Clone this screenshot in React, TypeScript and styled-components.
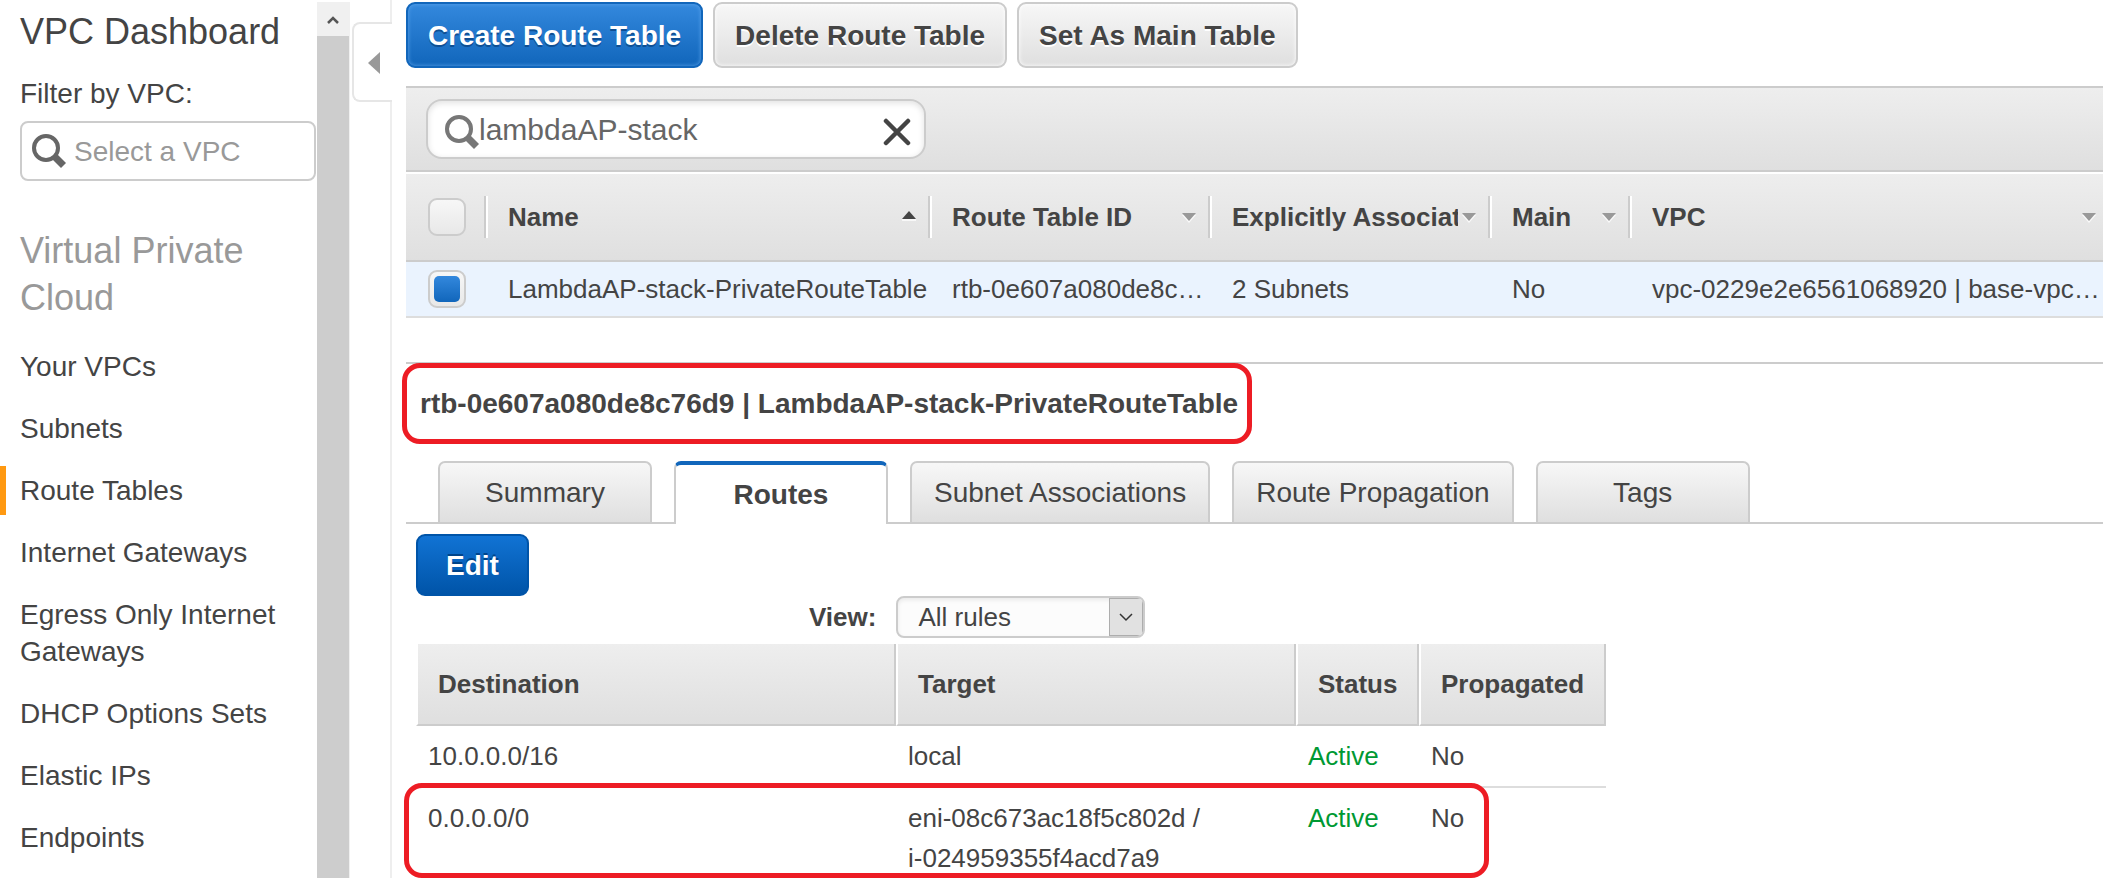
import React, { useState } from 'react';
import styled, { createGlobalStyle, css } from 'styled-components';

const GlobalStyle = createGlobalStyle`
  *, *::before, *::after { box-sizing: border-box; }
  body {
    margin: 0;
    background: #fff;
    color: #444;
    font-family: "Liberation Sans", Arial, Helvetica, sans-serif;
  }
  button, input, select { font-family: inherit; color: inherit; margin: 0; }
`;

const Page = styled.div`
  display: flex;
  height: 100vh;
  overflow: hidden;
`;

/* ---------- sidebar ---------- */

const Sidebar = styled.aside`
  flex: none;
  width: 317px;
  padding: 9px 1px 0 20px;
  overflow: hidden;
`;

const SidebarHeading = styled.h1`
  margin: 0 0 20px;
  font-size: 36px;
  line-height: 46px;
  font-weight: 400;
`;

const FilterLabel = styled.label`
  display: block;
  margin-bottom: 9px;
  font-size: 28px;
  line-height: 37px;
`;

const FilterBox = styled.div`
  display: flex;
  align-items: center;
  gap: 8px;
  height: 60px;
  padding: 0 10px;
  border: 2px solid #ccc;
  border-radius: 8px;
`;

const FilterInput = styled.input`
  flex: 1;
  min-width: 0;
  padding: 0;
  border: 0;
  outline: 0;
  background: none;
  font-size: 28px;
  line-height: 37px;
  &::placeholder { color: #999; opacity: 1; }
`;

const SectionTitle = styled.h2`
  margin: 46px 0 21px;
  font-size: 36px;
  line-height: 47px;
  font-weight: 400;
  color: #999;
`;

const NavList = styled.ul`
  display: flex;
  flex-direction: column;
  gap: 13px;
  margin: 0 0 0 -20px;
  padding: 0;
  list-style: none;
`;

const NavLink = styled.a<{ $active?: boolean }>`
  display: block;
  padding: 6px 20px 6px 14px;
  border-left: 6px solid ${(p) => (p.$active ? '#f91' : 'transparent')};
  color: #444;
  font-size: 28px;
  line-height: 37px;
  text-decoration: none;
`;

const ScrollTrack = styled.div`
  display: flex;
  flex-direction: column;
  flex: none;
  width: 33px;
  padding-right: 1px;
  border-top: 2px solid #fff;
  background: #f0f0f0;
`;

const ScrollArrow = styled.div`
  display: flex;
  flex: none;
  align-items: center;
  justify-content: center;
  height: 34px;
`;

const ScrollThumb = styled.div`
  flex: 1;
  background: #cdcdcd;
`;

const Gutter = styled.div`
  flex: none;
  width: 42px;
  padding: 22px 0 0 2px;
  border-right: 2px solid #eee;
`;

const CollapseButton = styled.button`
  display: flex;
  align-items: center;
  width: 40px;
  height: 80px;
  padding: 2px 0 0 14px;
  border: 2px solid #e6e6e6;
  border-right: 0;
  border-radius: 8px 0 0 8px;
  background: #fff;
`;

/* ---------- toolbar ---------- */

const Main = styled.main`
  flex: 1;
  min-width: 0;
  padding-left: 14px;
  overflow: hidden;
`;

const Actions = styled.div`
  display: flex;
  gap: 10px;
  padding: 2px 0 18px;
`;

const ActionButton = styled.button<{ $primary?: boolean }>`
  height: 66px;
  padding: 2px 20px 0;
  border: 2px solid #ccc;
  border-radius: 9px;
  background: linear-gradient(#f7f7f7, #dfdfdf);
  box-shadow: inset 0 0 4px #fff;
  color: #444;
  font-size: 28px;
  font-weight: 700;
  text-shadow: 0 2px 0 #fff;
  white-space: nowrap;
  ${(p) => p.$primary && css`
    border-color: #1166bb;
    background: linear-gradient(#3388dd, #1166bb);
    box-shadow: inset 0 0 4px #5ba3ea;
    color: #fff;
    text-shadow: 0 2px 0 #0e4f94;
  `}
`;

const SearchBar = styled.div`
  height: 86px;
  padding: 11px 20px 0;
  border: solid #ccc;
  border-width: 2px 0;
  background: linear-gradient(#eee, #dfdfdf);
`;

const SearchBox = styled.div`
  display: flex;
  align-items: center;
  width: 500px;
  height: 60px;
  padding: 5px 11px 0 17px;
  border: 2px solid #ccc;
  border-radius: 16px;
  background: #fff;
  box-shadow: inset 0 2px 6px rgba(0, 0, 0, 0.12);
`;

const SearchInput = styled.input`
  flex: 1;
  min-width: 0;
  height: 48px;
  padding: 0 0 4px;
  border: 0;
  outline: 0;
  background: none;
  color: #666;
  font-size: 30px;
`;

const ClearButton = styled.button`
  display: flex;
  padding: 1px 2px 0;
  border: 0;
  background: none;
`;

/* ---------- route table list ---------- */

const ListTable = styled.table`
  width: 100%;
  table-layout: fixed;
  border-collapse: separate;
  border-spacing: 0;
  font-size: 26px;
  line-height: 34px;
`;

const ListHead = styled.thead`
  background: linear-gradient(#eee, #dfdfdf);
`;

const ListTh = styled.th<{ $w?: number }>`
  width: ${(p) => (p.$w ? `${p.$w}px` : 'auto')};
  height: 90px;
  padding: 0;
  border-top: 2px solid #fff;
  border-bottom: 2px solid #ccc;
`;

const HeadCell = styled.div<{ $last?: boolean }>`
  display: flex;
  align-items: center;
  height: 42px;
  padding: 0 ${(p) => (p.$last ? 7 : 16)}px 0 20px;
  box-shadow: ${(p) => (p.$last ? 'none' : 'inset -2px 0 #fff, inset -4px 0 #ccc')};
`;

const SortButton = styled.button`
  display: flex;
  align-items: center;
  flex: 1;
  gap: 4px;
  min-width: 0;
  padding: 0;
  border: 0;
  background: none;
  font-size: 26px;
  line-height: 34px;
  font-weight: 700;
  text-align: left;
`;

const SortLabel = styled.span`
  flex: 1;
  min-width: 0;
  overflow: hidden;
  white-space: nowrap;
`;

const ListTd = styled.td`
  height: 56px;
  padding: 0 0 0 20px;
  border-bottom: 2px solid #ddd;
  background: #eaf3fe;
  white-space: nowrap;
`;

const CheckBox = styled.input`
  display: block;
  appearance: none;
  width: 38px;
  height: 38px;
  margin: 0 0 0 2px;
  padding: 4px;
  border: 2px solid #ccc;
  border-radius: 9px;
  background: linear-gradient(#f7f7f7, #e8e8e8);
  &:checked::before {
    content: '';
    display: block;
    width: 26px;
    height: 26px;
    border-radius: 5px;
    background: linear-gradient(#3388dd, #1166bb);
  }
`;

/* ---------- details ---------- */

const Details = styled.section`
  margin-top: 44px;
  padding-top: 22px;
  border-top: 2px solid #ccc;
`;

const marker = css`
  content: '';
  position: absolute;
  border: 5px solid #ed1c24;
  border-radius: 18px;
  pointer-events: none;
`;

const DetailsTitle = styled.h2`
  position: relative;
  width: fit-content;
  margin: 0 0 39px 14px;
  font-size: 28px;
  line-height: 36px;
  font-weight: 700;
  white-space: nowrap;
  &::after {
    ${marker}
    inset: -23px -14px -22px -18px;
  }
`;

const Tabs = styled.div`
  display: flex;
  gap: 22px;
  padding-left: 32px;
  border-bottom: 2px solid #ccc;
`;

const Tab = styled.button<{ $active?: boolean }>`
  min-width: 214px;
  height: 61px;
  padding: 0 22px;
  border: 2px solid #ccc;
  border-bottom: 0;
  border-radius: 7px 7px 0 0;
  background: linear-gradient(#f7f7f7, #dfdfdf);
  font-size: 28px;
  white-space: nowrap;
  ${(p) => p.$active && css`
    height: 63px;
    margin-bottom: -2px;
    border-top: 4px solid #1166bb;
    background: #fff;
    font-weight: 700;
  `}
`;

const TabPanel = styled.div`
  padding: 10px 0 0 10px;
`;

const EditButton = styled.button`
  display: block;
  height: 62px;
  padding: 2px 28px 0;
  border: 2px solid #0054a8;
  border-radius: 9px;
  background: linear-gradient(#1173d4, #0054a8);
  color: #fff;
  font-size: 28px;
  font-weight: 700;
  text-shadow: 0 -2px 0 #00448a;
`;

const ViewRow = styled.div`
  display: flex;
  align-items: center;
  gap: 20px;
  margin-bottom: 6px;
  padding-left: 393px;
`;

const ViewLabel = styled.label`
  font-size: 26px;
  line-height: 34px;
  font-weight: 700;
`;

const SelectBox = styled.div`
  position: relative;
  width: 249px;
  height: 42px;
  border: 2px solid #ccc;
  border-radius: 8px;
  background: #fcfcfc;
  box-shadow: inset 0 2px 4px rgba(0, 0, 0, 0.08);
  overflow: hidden;
`;

const ViewSelect = styled.select`
  appearance: none;
  width: 100%;
  height: 38px;
  padding: 0 44px 0 20px;
  border: 0;
  outline: 0;
  background: none;
  font-size: 26px;
`;

const SelectArrow = styled.span`
  position: absolute;
  top: 0;
  right: 0;
  display: flex;
  align-items: center;
  justify-content: center;
  width: 34px;
  height: 38px;
  border: 1px solid #adadad;
  background: #e1e1e1;
  pointer-events: none;
`;

const RoutesTable = styled.table`
  width: 1190px;
  max-width: 100%;
  table-layout: fixed;
  border-collapse: separate;
  border-spacing: 0;
  font-size: 26px;
  line-height: 40px;
  text-align: left;
`;

const RouteTh = styled.th<{ $w: number }>`
  width: ${(p) => p.$w}px;
  height: 82px;
  padding: 0 0 0 20px;
  border-left: 2px solid #fff;
  border-right: 2px solid #ccc;
  border-bottom: 2px solid #ccc;
  background: linear-gradient(#eee, #dfdfdf);
`;

const RouteTr = styled.tr<{ $marked?: boolean }>`
  position: relative;
  ${(p) => p.$marked && css`
    &::after {
      ${marker}
      top: -5px;
      left: -12px;
      right: 117px;
      height: 95px;
    }
  `}
`;

const RouteTd = styled.td<{ $ok?: boolean }>`
  padding: 10px 0 10px 12px;
  border-bottom: 2px solid #ddd;
  color: ${(p) => (p.$ok ? '#093' : '#444')};
  vertical-align: top;
`;

const Block = styled.span`
  display: block;
`;

/* ---------- icons ---------- */

const Magnifier = ({ color }: { color: string }) => (
  <svg width="34" height="34" viewBox="0 0 34 34" fill="none" aria-hidden="true">
    <circle cx="14" cy="14" r="12" stroke={color} strokeWidth="4" />
    <path d="M22 22 31.500 31.500" stroke={color} strokeWidth="7" />
  </svg>
);

const Cross = () => (
  <svg width="28" height="28" viewBox="0 0 28 28" fill="none" aria-hidden="true">
    <path d="M3 3 25 25M25 3 3 25" stroke="#444" strokeWidth="4.500" strokeLinecap="round" />
  </svg>
);

const SortArrow = ({ up }: { up?: boolean }) => (
  <svg width="14" height="12" viewBox="0 0 14 12" aria-hidden="true">
    {up ? (
      <>
        <path d="M0 8h14v2H0z" fill="#fff" opacity=".7" />
        <path d="M7 0 14 8H0z" fill="#444" />
      </>
    ) : (
      <>
        <path d="M7 12 14 4H0z" fill="#fff" opacity=".8" />
        <path d="M7 10 14 2H0z" fill="#999" />
      </>
    )}
  </svg>
);

/* ---------- data ---------- */

const navItems = [
  'Your VPCs',
  'Subnets',
  'Route Tables',
  'Internet Gateways',
  'Egress Only Internet Gateways',
  'DHCP Options Sets',
  'Elastic IPs',
  'Endpoints',
];

const listColumns = [
  { label: 'Name', width: 444, up: true },
  { label: 'Route Table ID', width: 280 },
  { label: 'Explicitly Associated', width: 280 },
  { label: 'Main', width: 140 },
  { label: 'VPC' },
];

const listRow = [
  'LambdaAP-stack-PrivateRouteTable',
  'rtb-0e607a080de8c…',
  '2 Subnets',
  'No',
  'vpc-0229e2e6561068920 | base-vpc…',
];

const tabs = ['Summary', 'Routes', 'Subnet Associations', 'Route Propagation', 'Tags'];

const routes = [
  { destination: '10.0.0.0/16', target: ['local'], marked: false },
  { destination: '0.0.0.0/0', target: ['eni-08c673ac18f5c802d /', 'i-024959355f4acd7a9'], marked: true },
];

export default function App() {
  const [query, setQuery] = useState('lambdaAP-stack');
  const [all, setAll] = useState(false);
  const [checked, setChecked] = useState(true);
  const [tab, setTab] = useState('Routes');

  return (
    <>
      <GlobalStyle />
      <Page>
        <Sidebar>
          <SidebarHeading>VPC Dashboard</SidebarHeading>
          <FilterLabel htmlFor="vpc-filter">Filter by VPC:</FilterLabel>
          <FilterBox>
            <Magnifier color="#666" />
            <FilterInput id="vpc-filter" placeholder="Select a VPC" />
          </FilterBox>
          <SectionTitle>Virtual Private Cloud</SectionTitle>
          <nav>
            <NavList>
              {navItems.map((item) => (
                <li key={item}>
                  <NavLink href="#" $active={item === 'Route Tables'}>{item}</NavLink>
                </li>
              ))}
            </NavList>
          </nav>
        </Sidebar>
        <ScrollTrack>
          <ScrollArrow>
            <svg width="12" height="10" viewBox="0 0 12 10" fill="none" aria-hidden="true">
              <path d="M1 9 6 4 11 9" stroke="#555" strokeWidth="2.500" />
            </svg>
          </ScrollArrow>
          <ScrollThumb />
        </ScrollTrack>
        <Gutter>
          <CollapseButton type="button" aria-label="Collapse sidebar">
            <svg width="12" height="22" viewBox="0 0 12 22" aria-hidden="true">
              <path d="M12 0v22L0 11z" fill="#999" />
            </svg>
          </CollapseButton>
        </Gutter>
        <Main>
          <Actions>
            <ActionButton type="button" $primary>Create Route Table</ActionButton>
            <ActionButton type="button">Delete Route Table</ActionButton>
            <ActionButton type="button">Set As Main Table</ActionButton>
          </Actions>
          <SearchBar>
            <SearchBox>
              <Magnifier color="#777" />
              <SearchInput
                aria-label="Search route tables"
                value={query}
                onChange={(e) => setQuery(e.target.value)}
              />
              <ClearButton type="button" aria-label="Clear search" onClick={() => setQuery('')}>
                <Cross />
              </ClearButton>
            </SearchBox>
          </SearchBar>
          <ListTable>
            <ListHead>
              <tr>
                <ListTh $w={82}>
                  <HeadCell>
                    <CheckBox
                      type="checkbox"
                      aria-label="Select all route tables"
                      checked={all}
                      onChange={() => setAll(!all)}
                    />
                  </HeadCell>
                </ListTh>
                {listColumns.map((col) => (
                  <ListTh key={col.label} $w={col.width}>
                    <HeadCell $last={!col.width}>
                      <SortButton type="button">
                        <SortLabel>{col.label}</SortLabel>
                        <SortArrow up={col.up} />
                      </SortButton>
                    </HeadCell>
                  </ListTh>
                ))}
              </tr>
            </ListHead>
            <tbody>
              <tr>
                <ListTd>
                  <CheckBox
                    type="checkbox"
                    aria-label="Select LambdaAP-stack-PrivateRouteTable"
                    checked={checked}
                    onChange={() => setChecked(!checked)}
                  />
                </ListTd>
                {listRow.map((text) => (
                  <ListTd key={text}>{text}</ListTd>
                ))}
              </tr>
            </tbody>
          </ListTable>
          <Details>
            <DetailsTitle>rtb-0e607a080de8c76d9 | LambdaAP-stack-PrivateRouteTable</DetailsTitle>
            <Tabs role="tablist">
              {tabs.map((name) => (
                <Tab
                  key={name}
                  type="button"
                  role="tab"
                  aria-selected={name === tab}
                  $active={name === tab}
                  onClick={() => setTab(name)}
                >
                  {name}
                </Tab>
              ))}
            </Tabs>
            <TabPanel role="tabpanel">
              <EditButton type="button">Edit</EditButton>
              <ViewRow>
                <ViewLabel htmlFor="view-rules">View:</ViewLabel>
                <SelectBox>
                  <ViewSelect id="view-rules" defaultValue="all">
                    <option value="all">All rules</option>
                  </ViewSelect>
                  <SelectArrow>
                    <svg width="14" height="9" viewBox="0 0 14 9" fill="none" aria-hidden="true">
                      <path d="M1 1 7 7 13 1" stroke="#333" strokeWidth="1.500" />
                    </svg>
                  </SelectArrow>
                </SelectBox>
              </ViewRow>
              <RoutesTable>
                <thead>
                  <tr>
                    <RouteTh $w={480}>Destination</RouteTh>
                    <RouteTh $w={400}>Target</RouteTh>
                    <RouteTh $w={123}>Status</RouteTh>
                    <RouteTh $w={187}>Propagated</RouteTh>
                  </tr>
                </thead>
                <tbody>
                  {routes.map((route) => (
                    <RouteTr key={route.destination} $marked={route.marked}>
                      <RouteTd>{route.destination}</RouteTd>
                      <RouteTd>
                        {route.target.map((line) => (
                          <Block key={line}>{line}</Block>
                        ))}
                      </RouteTd>
                      <RouteTd $ok>Active</RouteTd>
                      <RouteTd>No</RouteTd>
                    </RouteTr>
                  ))}
                </tbody>
              </RoutesTable>
            </TabPanel>
          </Details>
        </Main>
      </Page>
    </>
  );
}
